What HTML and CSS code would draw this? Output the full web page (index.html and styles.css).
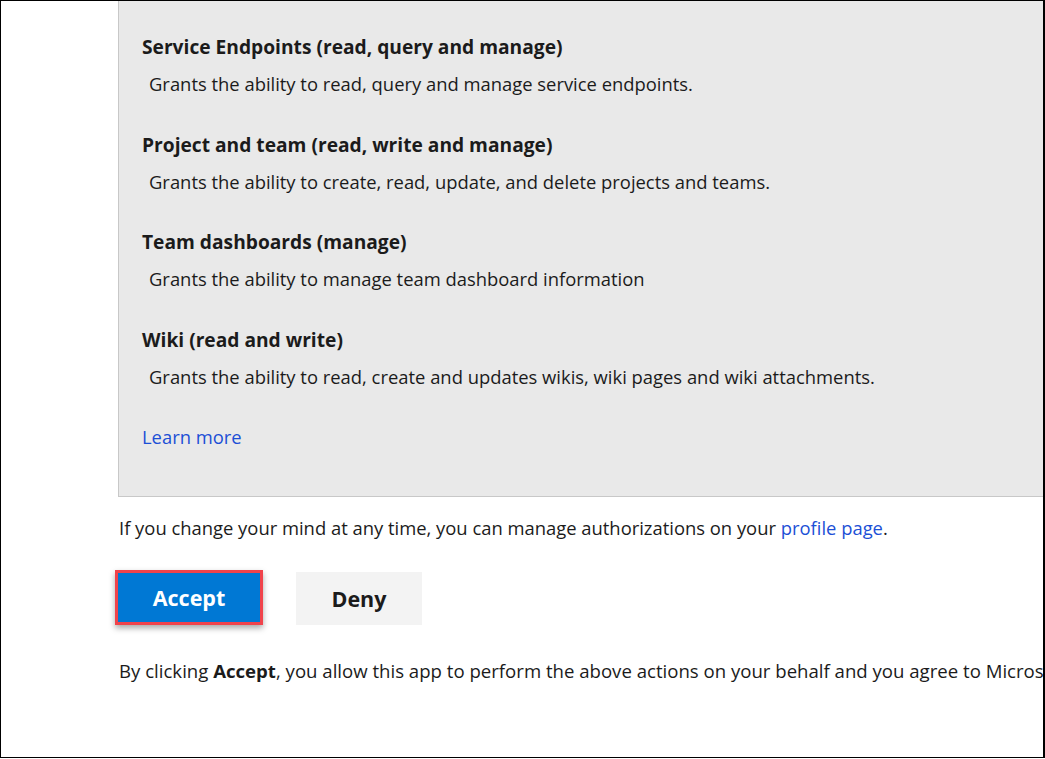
FILE: index.html
```html
<!DOCTYPE html>
<html lang="en">
<head>
<meta charset="utf-8">
<title>Authorize</title>
<link rel="stylesheet" href="styles.css">
</head>
<body>
<div class="frame">
  <div class="content">
    <div class="scopes">
      <div class="scope">
        <div class="scope-title">Service Endpoints (read, query and manage)</div>
        <div class="scope-desc">Grants the ability to read, query and manage service endpoints.</div>
      </div>
      <div class="scope">
        <div class="scope-title">Project and team (read, write and manage)</div>
        <div class="scope-desc">Grants the ability to create, read, update, and delete projects and teams.</div>
      </div>
      <div class="scope">
        <div class="scope-title">Team dashboards (manage)</div>
        <div class="scope-desc">Grants the ability to manage team dashboard information</div>
      </div>
      <div class="scope">
        <div class="scope-title">Wiki (read and write)</div>
        <div class="scope-desc">Grants the ability to read, create and updates wikis, wiki pages and wiki attachments.</div>
      </div>
      <a class="link learn" href="#">Learn more</a>
    </div>
    <p class="note">If you change your mind at any time, you can manage authorizations on your <a class="link" href="#">profile page</a>.</p>
    <div class="actions">
      <button class="btn btn-accept">Accept</button>
      <button class="btn btn-deny">Deny</button>
    </div>
    <p class="legal">By clicking <b>Accept</b>, you allow this app to perform the above actions on your behalf and you agree to Micros</p>
  </div>
</div>
</body>
</html>
```
FILE: styles.css
```css
html, body {
  margin: 0;
  padding: 0;
  background: #fff;
}
body {
  font-family: "Open Sans", "Noto Sans", "Liberation Sans", sans-serif;
  color: #1b1b1b;
  font-size: 18.4px;
  line-height: 24px;
}
.frame {
  width: 1045px;
  height: 758px;
  box-sizing: border-box;
  border-left: 1px solid #000;
  border-top: 1px solid #000;
  border-right: 2px solid #000;
  border-bottom: 1px solid #000;
  overflow: hidden;
}
.content {
  width: 1100px;
  padding-left: 117px;
}
.scopes {
  background: #e9e9e9;
  border: 1px solid #c8c8c8;
  border-top: none;
  padding: 34px 0 47px 23px;
}
.scope {
  margin-bottom: 36.6px;
}
.scope-title {
  font-weight: 700;
  font-size: 19.2px;
}
.scope-desc {
  margin-top: 13px;
  padding-left: 7px;
}
.link {
  color: #1c4fd6;
  text-decoration: none;
}
.learn {
  display: block;
}
.note {
  margin: 19px 0 30px 1px;
}
.actions {
  display: flex;
  align-items: flex-start;
  gap: 33px;
}
.btn {
  font-family: inherit;
  font-weight: 700;
  font-size: 21.5px;
  border: none;
  padding: 0;
  margin: 0;
  cursor: pointer;
}
.btn-accept {
  width: 148px;
  height: 55px;
  background: #0078d4;
  color: #fff;
  border: 3px solid #f0434b;
  box-shadow: 0 3px 6px rgba(0, 0, 0, 0.35);
  margin-left: -3px;
}
.btn-deny {
  width: 126px;
  height: 53px;
  margin-top: 2px;
  background: #f3f3f3;
  color: #1b1b1b;
}
.legal {
  margin: 34px 0 0 1px;
  font-size: 18.6px;
  white-space: nowrap;
}
```
